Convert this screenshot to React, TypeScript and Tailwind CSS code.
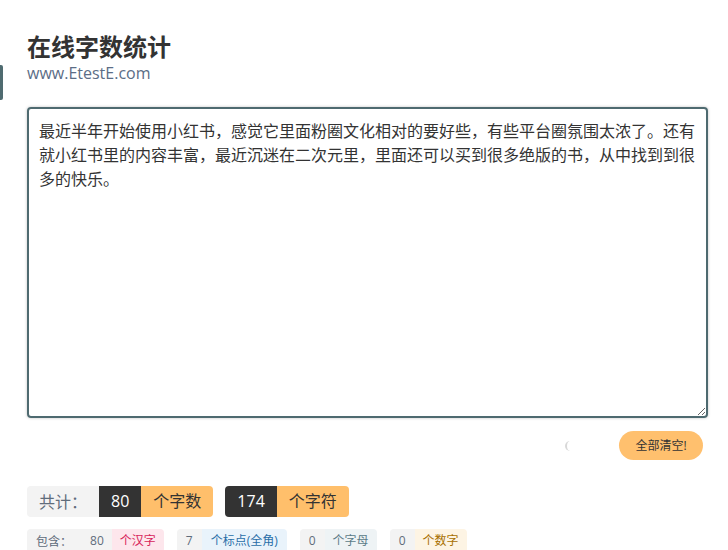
import React from "react";

const TEXT =
  "最近半年开始使用小红书，感觉它里面粉圈文化相对的要好些，有些平台圈氛围太浓了。还有就小红书里的内容丰富，最近沉迷在二次元里，里面还可以买到很多绝版的书，从中找到到很多的快乐。";

const font = { fontFamily: '"Open Sans", "Noto Sans CJK SC", sans-serif' };
const cjk = { fontFamily: '"Noto Sans CJK SC", sans-serif' };

export default function App() {
  return (
    <div className="relative min-h-[550px] w-[728px] overflow-hidden bg-white text-[#333]" style={font}>
      <div className="absolute left-0 top-[65px] h-[35px] w-[3px] rounded-r-[2px] bg-[#4f6b70]" />
      <div className="pl-[27px] pr-[20px] pt-[32px]">
        <h1 className="text-[24px] font-bold leading-[29px] text-[#333]">在线字数统计</h1>
        <div className="mt-[3px] text-[16px] leading-[19px] text-[#5b6d86]">www.EtestE.com</div>

        <textarea
          autoFocus
          defaultValue={TEXT}
          className="mt-[24px] block h-[311px] w-[681px] rounded-[4px] border-2 border-[#4e6a70] px-[10px] py-[10px] text-[16px] leading-[24px] text-[#333] shadow-[0_0_3px_rgba(0,0,0,0.25)] outline-none"
          style={font}
        />

        <div className="mt-[13px] flex h-[29px] items-center justify-end pr-[5px]">
          <div className="mr-[44px] h-[10px] w-[10px] rounded-full border-l-2 border-[#d8d8d8]" />
          <button className="h-[29px] w-[84px] rounded-full bg-[#ffc06e] text-[12px] text-[#333]">全部清空!</button>
        </div>

        <div className="mt-[26px] flex gap-[12px] text-[16px] leading-[31px]">
          <div className="flex">
            <span className="rounded-l-[4px] bg-[#f3f3f3] px-[12px] text-[#5f6c7b]" style={cjk}>共计：</span>
            <span className="bg-[#333] px-[12px] text-white">80</span>
            <span className="rounded-r-[4px] bg-[#ffbf6b] px-[12px] text-[#333]">个字数</span>
          </div>
          <div className="flex">
            <span className="rounded-l-[4px] bg-[#333] px-[12px] text-white">174</span>
            <span className="rounded-r-[4px] bg-[#ffbf6b] px-[12px] text-[#333]">个字符</span>
          </div>
        </div>

        <div className="mt-[12px] flex gap-[13px] text-[12px] leading-[24px]">
          <div className="flex">
            <span className="rounded-l-[4px] bg-[#f3f3f3] pl-[9px] pr-[10px] text-[#5f6c7b]" style={cjk}>包含：</span>
            <span className="bg-[#f3f3f3] px-[8px] text-[#5f6c7b]">80</span>
            <span className="rounded-r-[4px] bg-[#fde6ec] px-[8px] text-[#d8245a]">个汉字</span>
          </div>
          <div className="flex">
            <span className="rounded-l-[4px] bg-[#f3f3f3] px-[9px] text-[#5f6c7b]">7</span>
            <span className="rounded-r-[4px] bg-[#e9f3fb] px-[9px] text-[#2a6fa8]">个标点(全角)</span>
          </div>
          <div className="flex">
            <span className="rounded-l-[4px] bg-[#f3f3f3] px-[9px] text-[#5f6c7b]">0</span>
            <span className="rounded-r-[4px] bg-[#eef3f5] px-[8px] text-[#5b7b88]">个字母</span>
          </div>
          <div className="flex">
            <span className="rounded-l-[4px] bg-[#f3f3f3] px-[9px] text-[#5f6c7b]">0</span>
            <span className="rounded-r-[4px] bg-[#fdf4e4] px-[8px] text-[#a87000]">个数字</span>
          </div>
        </div>
      </div>
    </div>
  );
}
